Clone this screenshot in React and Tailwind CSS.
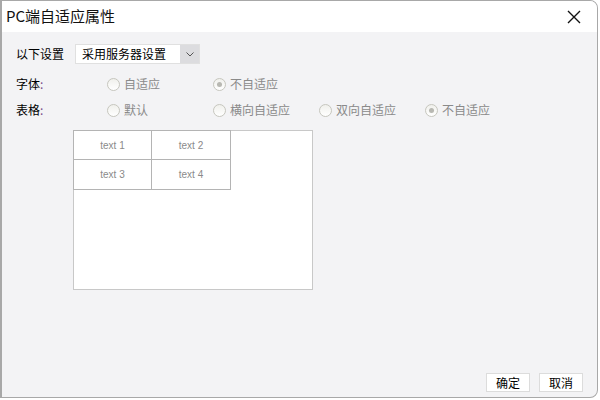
import React from 'react';

const font = { fontFamily: '"Noto Sans CJK SC", "Liberation Sans", sans-serif' };

function Radio({ label, checked }) {
  return (
    <div className="flex items-center w-[106px] h-5">
      <span className="w-[13px] h-[13px] rounded-full border border-[#c6c6be] bg-gradient-to-b from-[#f0f0ec] to-white flex items-center justify-center shrink-0">
        {checked && <span className="w-[5px] h-[5px] rounded-full bg-[#b8b8b2]" />}
      </span>
      <span className="ml-[4px] text-[12px] text-[#8a8a8a]">{label}</span>
    </div>
  );
}

function Row({ label, options }) {
  return (
    <div className="flex items-center h-5">
      <div className="w-[105px] pl-[14px] text-[12px] text-black">
        {label}<span className="text-[#7a4a8a]">:</span>
      </div>
      {options.map((o) => (
        <Radio key={o.label} label={o.label} checked={o.checked} />
      ))}
    </div>
  );
}

export default function App() {
  return (
    <div className="w-[600px] h-[400px] bg-white" style={font}>
      <div className="w-[598px] h-[398px] border border-[#a8a8a8] border-l-2 rounded-tr-[8px] rounded-br-[8px] overflow-hidden flex flex-col bg-[#f3f3f5]">
        <div className="h-[31px] bg-white flex items-center justify-between pl-[4px] pr-[16px] shrink-0">
          <span className="text-[15px] text-[#111]">PC端自适应属性</span>
          <svg width="14" height="14" viewBox="0 0 14 14">
            <path d="M1 1 L13 13 M13 1 L1 13" stroke="#111" strokeWidth="1.4" />
          </svg>
        </div>

        <div className="flex-1 flex flex-col pt-[12px]">
          <div className="flex items-center h-5 pl-[14px]">
            <span className="text-[12px] text-black w-[59px]">以下设置</span>
            <div className="flex h-5 w-[125px] border border-[#e0e0e0] bg-white">
              <span className="flex-1 text-[12px] text-black pl-[6px] leading-[18px]">采用服务器设置</span>
              <span className="w-[19px] bg-[#dcdcdf] flex items-center justify-center">
                <svg width="8" height="5" viewBox="0 0 8 5">
                  <path d="M0.5 0.5 L4 4 L7.5 0.5" stroke="#555" strokeWidth="1" fill="none" />
                </svg>
              </span>
            </div>
          </div>

          <div className="mt-[10px]">
            <Row
              label="字体"
              options={[
                { label: '自适应' },
                { label: '不自适应', checked: true },
              ]}
            />
          </div>
          <div className="mt-[6px]">
            <Row
              label="表格"
              options={[
                { label: '默认' },
                { label: '横向自适应' },
                { label: '双向自适应' },
                { label: '不自适应', checked: true },
              ]}
            />
          </div>

          <div className="ml-[71px] mt-[10px] w-[240px] h-[160px] border border-[#c8c8c8] bg-white">
            <div className="grid grid-cols-[79px_79px] w-fit -mt-px -ml-px">
              {['text 1', 'text 2', 'text 3', 'text 4'].map((t, i) => (
                <div
                  key={t}
                  className={`h-[30px] flex items-center justify-center border-[#b4b4b4] text-[10px] text-[#8a8a8a] border ${i % 2 === 1 ? 'border-l-0' : ''} ${i > 1 ? 'border-t-0' : ''}`}
                  style={{ fontFamily: '"Liberation Sans", sans-serif' }}
                >
                  {t}
                </div>
              ))}
            </div>
          </div>

          <div className="flex-1" />
          <div className="flex justify-end gap-[9px] pr-[14px] pb-[5px]">
            <button className="w-[44px] h-[19px] border border-[#dcdcdc] bg-white text-[12px] text-black leading-none">确定</button>
            <button className="w-[44px] h-[19px] border border-[#dcdcdc] bg-white text-[12px] text-black leading-none">取消</button>
          </div>
        </div>
      </div>
    </div>
  );
}
